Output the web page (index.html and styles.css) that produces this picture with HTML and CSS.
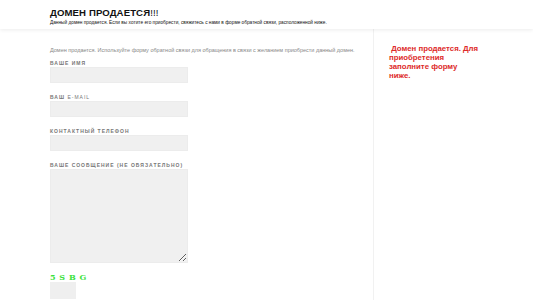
FILE: index.html
```
<!DOCTYPE html>
<html lang="ru">
<head>
<meta charset="utf-8">
<title>Домен продается</title>
<link rel="stylesheet" href="styles.css">
</head>
<body>
<header class="header">
  <div class="header-inner">
    <h1 class="title">ДОМЕН ПРОДАЕТСЯ<span class="bang">!!!</span></h1>
    <p class="subtitle">Данный домен продается. Если вы хотите его приобрести, свяжитесь с нами в форме обратной связи, расположенной ниже.</p>
  </div>
</header>
<div class="layout">
  <main class="main">
    <p class="intro">Домен продается. Используйте форму обратной связи для обращения в связи с желанием приобрести данный домен.</p>
    <form class="form">
      <label class="field"><span class="label">Ваше имя</span><input class="input" type="text"></label>
      <label class="field"><span class="label">Ваш <span class="light">e-mail</span></span><input class="input" type="text"></label>
      <label class="field"><span class="label">Контактный телефон</span><input class="input" type="text"></label>
      <label class="field"><span class="label">Ваше сообщение (не обязательно)</span><textarea class="textarea"></textarea></label>
      <div class="captcha"><span class="captcha-code">5 S B G</span><input class="captcha-input" type="text"></div>
    </form>
  </main>
  <aside class="side">
    <p class="promo">&nbsp;Домен продается. Для приобретения заполните форму ниже.</p>
  </aside>
</div>
</body>
</html>
```
FILE: styles.css
```
* { box-sizing: border-box; }
html, body { margin: 0; padding: 0; background: #fff; }
body { font-family: "Liberation Sans", Arial, sans-serif; color: #333; overflow: hidden; height: 300px; }

.header {
  height: 29px;
  background: #fff;
  box-shadow: 0 1px 4px rgba(0,0,0,0.08);
  position: relative;
  z-index: 1;
}
.header-inner { padding: 7px 0 0 50px; }
.title {
  margin: 0;
  font-size: 9.6px;
  line-height: 11px;
  font-weight: 700;
  color: #111;
  letter-spacing: 0.1px;
}
.bang { font-weight: 400; }
.subtitle {
  margin: 2px 0 0;
  font-size: 4.75px;
  line-height: 6px;
  color: #111;
}

.layout { display: flex; height: 271px; }
.main {
  width: 374px;
  padding: 17px 0 0 50px;
  border-right: 1px solid #f1f1f1;
}
.intro {
  margin: 0;
  font-size: 5.5px;
  line-height: 8px;
  color: #888;
  white-space: nowrap;
}
.form { display: flex; flex-direction: column; margin-top: 6px; }
.field { display: flex; flex-direction: column; margin-bottom: 11px; }
.label {
  font-size: 5px;
  line-height: 6px;
  font-weight: 700;
  text-transform: uppercase;
  letter-spacing: 1px;
  color: #777;
  margin-bottom: 1px;
}
.light { font-weight: 400; }
.input {
  width: 138px;
  height: 16px;
  border: 1px solid #ececec;
  background: #f0f0f0;
  padding: 0;
  margin: 0;
}
.textarea {
  width: 138px;
  height: 94px;
  border: 1px solid #ececec;
  background: #f0f0f0;
  padding: 0;
  margin: 0;
  resize: both;
}
.captcha { display: flex; flex-direction: column; margin-top: -1px; }
.captcha-code {
  font-family: "DejaVu Serif", serif;
  font-size: 8px;
  line-height: 9px;
  font-weight: 700;
  color: #3ee23e;
  letter-spacing: 0.5px;
}
.captcha-input {
  width: 26px;
  height: 17px;
  border: none;
  background: #efefef;
  margin: 0;
  padding: 0;
}

.side { flex: 1; padding: 15px 0 0 15px; }
.promo {
  margin: 0;
  width: 91px;
  font-size: 7.8px;
  line-height: 9px;
  font-weight: 700;
  color: #dd2a2a;
}
```
